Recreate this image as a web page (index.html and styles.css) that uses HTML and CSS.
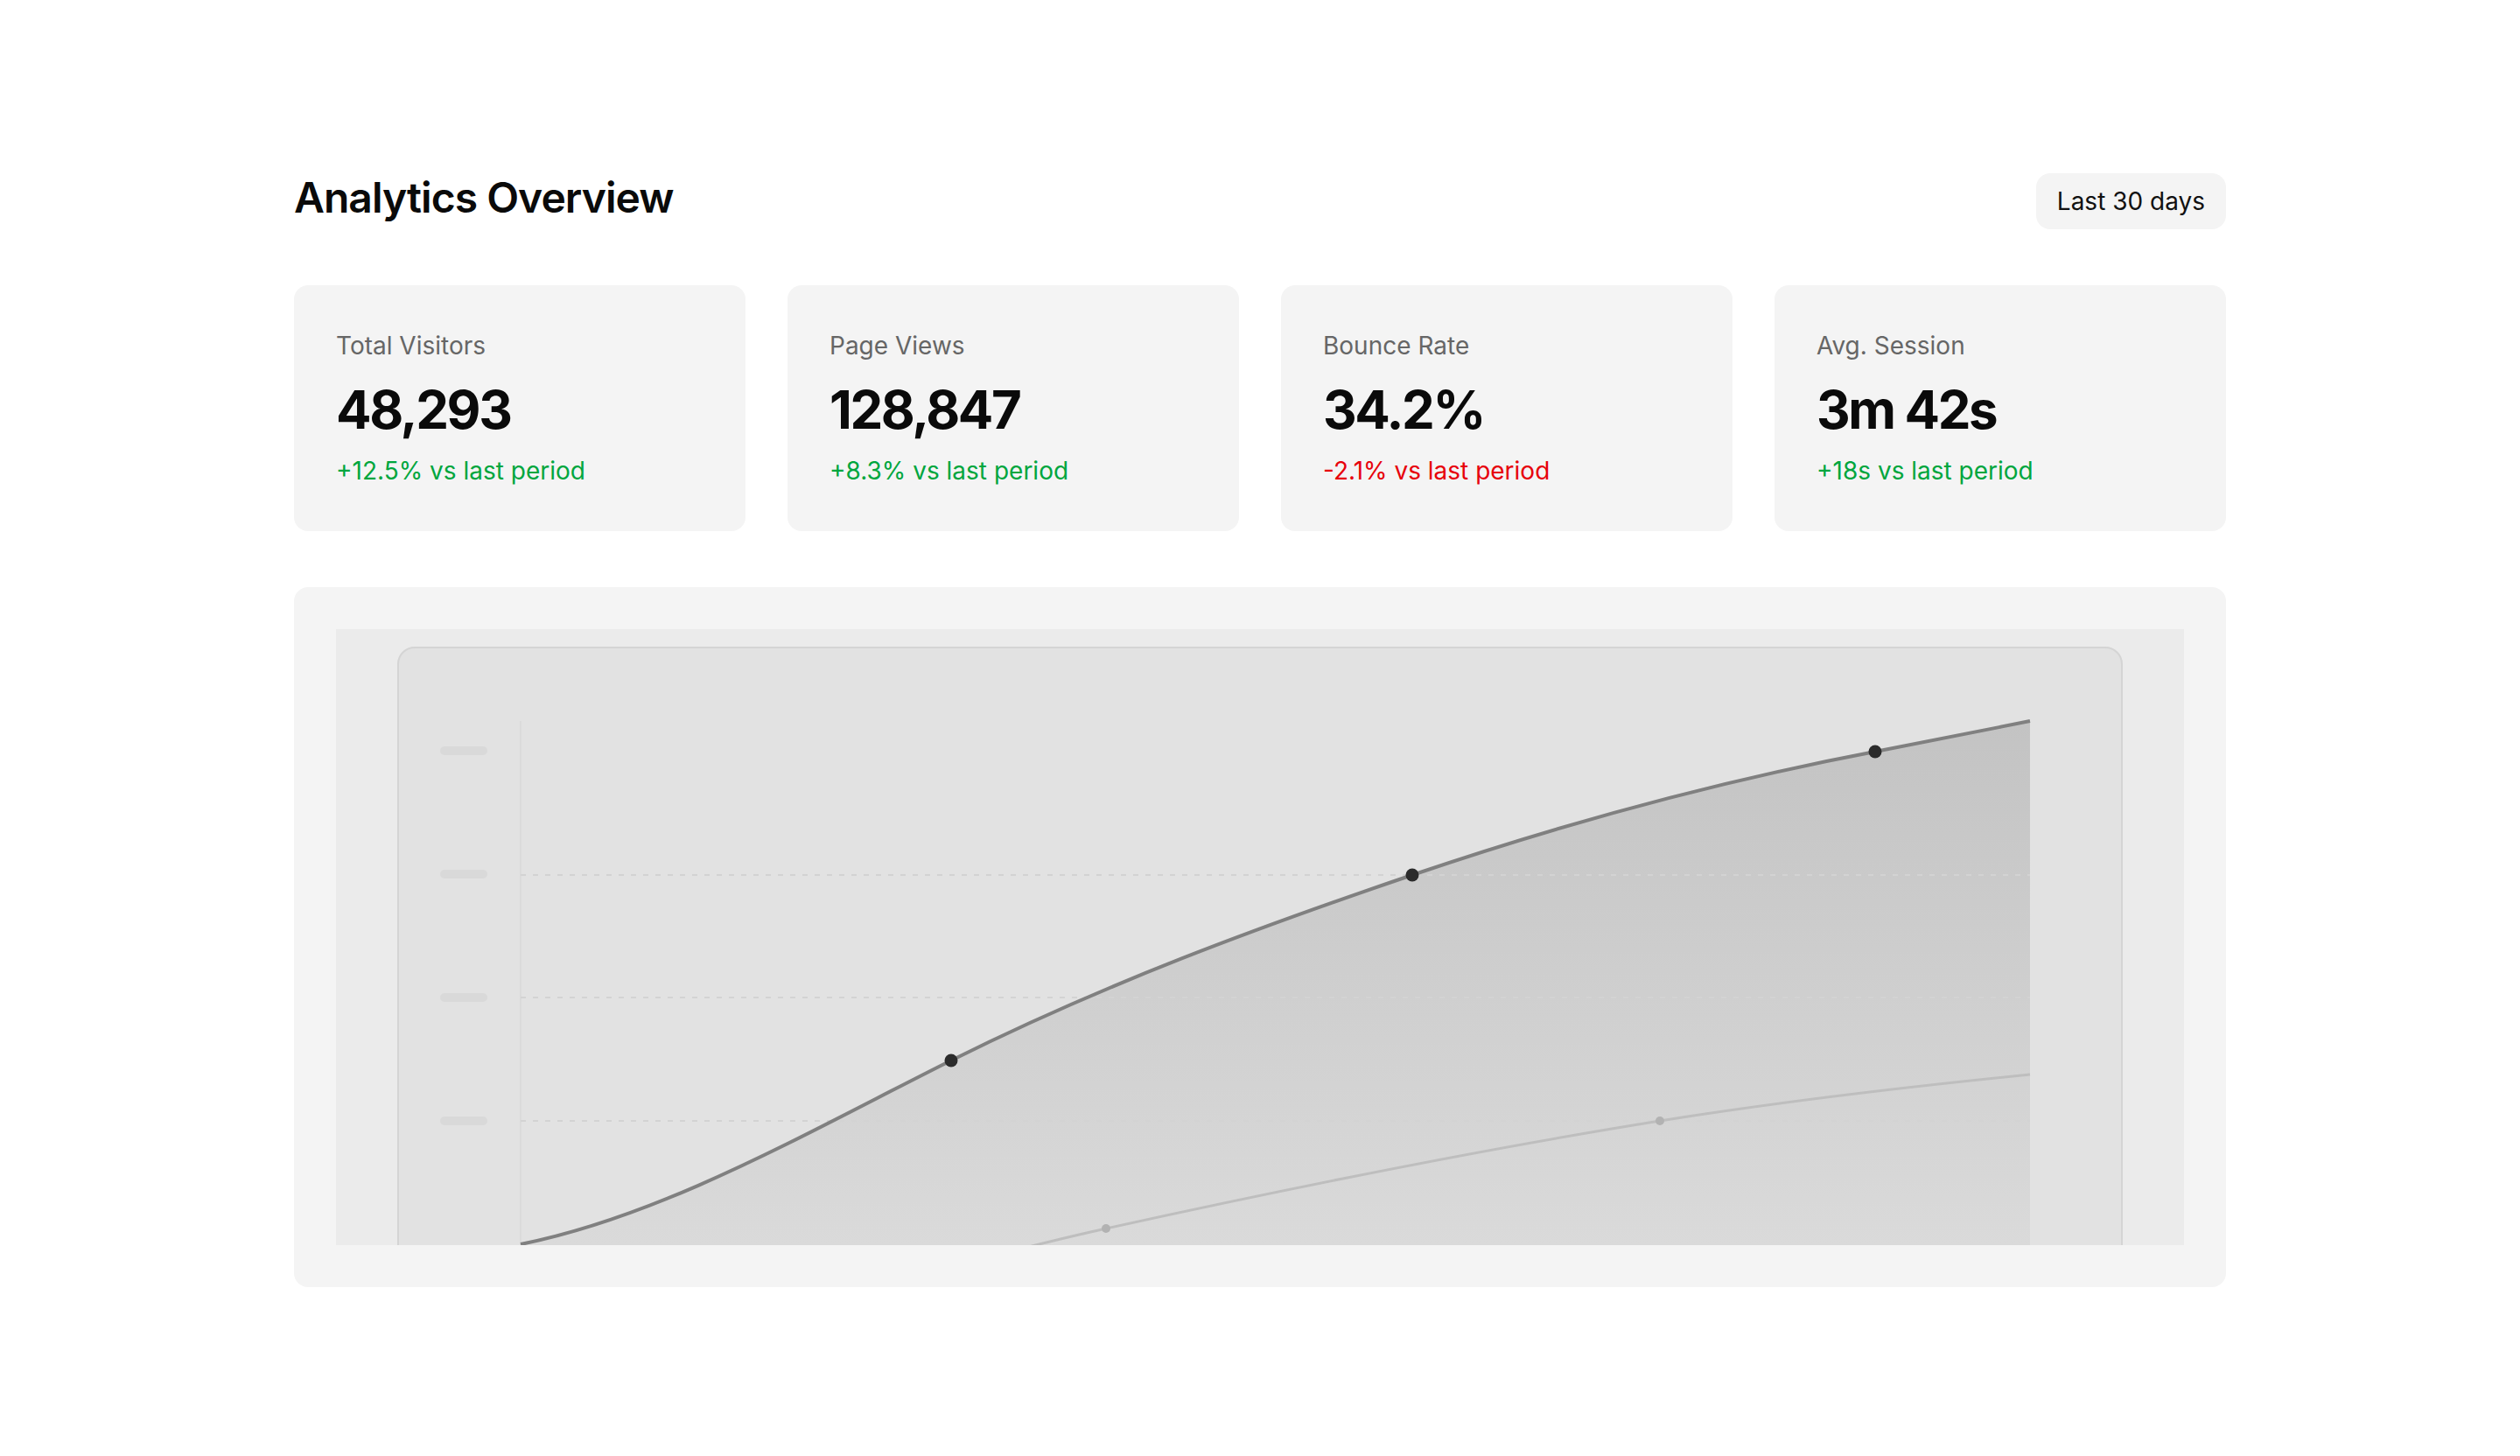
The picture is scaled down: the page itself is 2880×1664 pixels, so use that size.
FILE: index.html
```html
<!DOCTYPE html>
<html lang="en">
<head>
<meta charset="utf-8">
<title>Analytics Overview</title>
<link rel="stylesheet" href="styles.css">
</head>
<body>
<main class="page">
  <header class="header">
    <h1 class="title">Analytics Overview</h1>
    <button class="range" type="button">Last 30 days</button>
  </header>

  <section class="stats">
    <div class="stat">
      <div class="stat-label">Total Visitors</div>
      <div class="stat-value">48,293</div>
      <div class="stat-delta up">+12.5% vs last period</div>
    </div>
    <div class="stat">
      <div class="stat-label">Page Views</div>
      <div class="stat-value">128,847</div>
      <div class="stat-delta up">+8.3% vs last period</div>
    </div>
    <div class="stat">
      <div class="stat-label">Bounce Rate</div>
      <div class="stat-value">34.2%</div>
      <div class="stat-delta down">-2.1% vs last period</div>
    </div>
    <div class="stat">
      <div class="stat-label">Avg. Session</div>
      <div class="stat-value">3m 42s</div>
      <div class="stat-delta up">+18s vs last period</div>
    </div>
  </section>

  <section class="chart-panel">
    <div class="preview">
      <div class="chart-box">
        <svg class="chart-svg" width="1968" height="756" viewBox="0 0 1968 756" aria-hidden="true">
          <defs>
            <linearGradient id="areaFill" x1="0" y1="83" x2="0" y2="682" gradientUnits="userSpaceOnUse">
              <stop offset="0" stop-color="#c3c3c3"/>
              <stop offset="1" stop-color="#dadada"/>
            </linearGradient>
          </defs>
          <g fill="#d9d9d9">
            <rect x="47" y="112" width="54" height="10" rx="5"/>
            <rect x="47" y="253" width="54" height="10" rx="5"/>
            <rect x="47" y="394" width="54" height="10" rx="5"/>
            <rect x="47" y="535" width="54" height="10" rx="5"/>
          </g>
          <line x1="139" y1="83" x2="139" y2="756" stroke="#d3d3d3" stroke-width="1"/>
          <path d="M139 681 C303 648.2 467 553 631 471 C806.7 383.2 982.3 318.7 1158 259 C1334.3 199.1 1510.7 151.5 1687 118 C1746 106.8 1805 94.8 1864 83 L1864 756 L139 756 Z" fill="url(#areaFill)"/>
          <g stroke="#d3d3d3" stroke-width="2" stroke-dasharray="6 8">
            <line x1="139" y1="259" x2="1864" y2="259"/>
            <line x1="139" y1="399" x2="1864" y2="399"/>
            <line x1="139" y1="540" x2="1864" y2="540"/>
          </g>
          <path d="M600 714 C669 696.8 739 678.2 808 663 C1019 616.6 1230 573.8 1441 540 C1582 517.4 1723 501.1 1864 487" fill="none" stroke="#bebebe" stroke-width="3"/>
          <path d="M139 681 C303 648.2 467 553 631 471 C806.7 383.2 982.3 318.7 1158 259 C1334.3 199.1 1510.7 151.5 1687 118 C1746 106.8 1805 94.8 1864 83" fill="none" stroke="#808080" stroke-width="4"/>
          <g fill="#b2b2b2">
            <circle cx="808" cy="663" r="5"/>
            <circle cx="1441" cy="540" r="5"/>
          </g>
          <g fill="#2b2b2b">
            <circle cx="631" cy="471" r="7.5"/>
            <circle cx="1158" cy="259" r="7.5"/>
            <circle cx="1687" cy="118" r="7.5"/>
          </g>
        </svg>
      </div>
    </div>
  </section>
</main>
</body>
</html>
```

FILE: styles.css
```css
* {
  box-sizing: border-box;
}

body {
  margin: 0;
  background: #ffffff;
  font-family: Inter, "Noto Sans", sans-serif;
  color: #0a0a0a;
}

.page {
  width: 2208px;
  margin: 0 auto;
  padding-top: 198px;
}

.header {
  display: flex;
  justify-content: space-between;
  align-items: flex-start;
}

.title {
  margin: 0;
  font-size: 48px;
  font-weight: 600;
  line-height: 55px;
  letter-spacing: -0.02em;
}

.range {
  font-family: inherit;
  font-size: 28px;
  line-height: 40px;
  padding: 12px 24px;
  background: #f4f4f4;
  border: none;
  border-radius: 16px;
  color: #111111;
}

.stats {
  display: grid;
  grid-template-columns: repeat(4, 1fr);
  gap: 48px;
  margin-top: 64px;
}

.stat {
  background: #f4f4f4;
  border-radius: 16px;
  padding: 48px;
}

.stat-label {
  font-size: 28px;
  line-height: 42px;
  color: #666666;
}

.stat-value {
  margin-top: 16px;
  font-size: 60px;
  font-weight: 700;
  line-height: 72px;
  letter-spacing: -0.04em;
}

.stat-delta {
  margin-top: 13px;
  font-size: 28px;
  line-height: 42px;
}

.up {
  color: #00a63e;
}

.down {
  color: #e7000b;
}

.chart-panel {
  margin-top: 64px;
  background: #f4f4f4;
  border-radius: 16px;
  padding: 48px;
}

.preview {
  height: 704px;
  background: #ebebeb;
  overflow: hidden;
  padding: 20px 70px 0;
}

.chart-box {
  height: 760px;
  background: #e2e2e2;
  border: 2px solid #d4d4d4;
  border-radius: 20px;
  overflow: hidden;
}

.chart-svg {
  display: block;
}
```
